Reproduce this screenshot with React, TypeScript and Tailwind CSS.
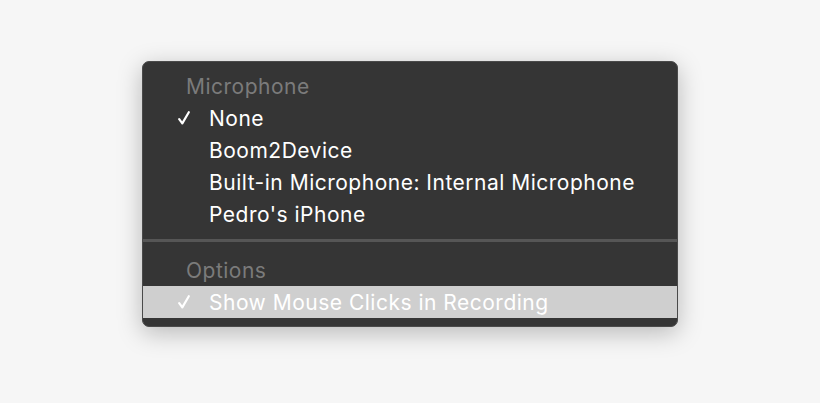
const mics = ['None', 'Boom2Device', 'Built-in Microphone: Internal Microphone', "Pedro's iPhone"];

const Check = () => (
  <svg className="absolute left-[35px] top-[9px]" width="12" height="14" viewBox="0 0 12 14" fill="none">
    <path d="M1.2 8.2 L4.3 12.4 L10.8 1.2" stroke="white" strokeWidth="2.2" strokeLinecap="round" strokeLinejoin="round" />
  </svg>
);

const Row = ({ label, checked = false, active = false }: { label: string; checked?: boolean; active?: boolean }) => (
  <div
    className={`relative h-8 pl-[66px] leading-[34px] text-white ${active ? 'bg-[#cfcfcf]' : ''}`}
  >
    {checked && <Check />}
    {label}
  </div>
);

const Header = ({ label }: { label: string }) => (
  <div className="h-8 pl-[43px] leading-[34px] text-[#7b7b7b]">{label}</div>
);

export default function App() {
  return (
    <div className="flex h-[403px] w-[820px] items-start justify-start bg-[#f6f6f6] pl-[142px] pt-[61px] font-['Inter',sans-serif] text-[21px] tracking-[0.5px]">
      <div className="w-[536px] overflow-hidden rounded-[7px] border border-[#4a4a4a] bg-[#353535] pb-2 pt-[8px] shadow-[0_6px_24px_rgba(0,0,0,0.25)]">
        <Header label="Microphone" />
        {mics.map((m, i) => (
          <Row key={m} label={m} checked={i === 0} />
        ))}
        <div className="mb-3 mt-[9px] h-[3px] bg-[#565656]" />
        <Header label="Options" />
        <Row label="Show Mouse Clicks in Recording" checked active />
      </div>
    </div>
  );
}
